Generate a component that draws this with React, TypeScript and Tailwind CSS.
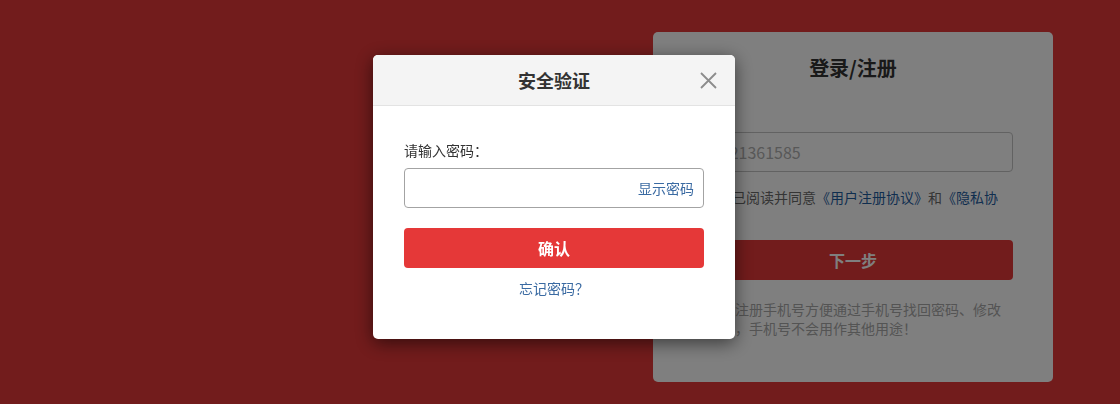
const FONT = "font-['Microsoft_YaHei','Noto_Sans_CJK_SC',sans-serif]";

function LoginPanel() {
  return (
    <div className="w-[400px] h-[350px] rounded-[5px] bg-white px-10 pt-[22px]">
      <h1 className="text-center text-[20px] leading-[28px] font-bold text-[#333]">
        登录/注册
      </h1>
      <div className="mt-[50px] h-10 rounded-[4px] border border-[#c4c4c4] px-[9px] flex items-center text-[16px] text-[#b0b0b0]">
        13521361585
      </div>
      <p className="mt-[15px] pr-[6px] text-[14px] leading-5 text-[#6a6a6a]">
        <span className="inline-block align-[-2px] mr-3 w-[13px] h-[13px] rounded-[2px] border border-[#999]" />
        我已阅读并同意
        <span className="text-[#1f5d9f]">《用户注册协议》</span>和
        <span className="text-[#1f5d9f]">《隐私协议》</span>
      </p>
      <button className="mt-[13px] w-full h-10 rounded-[4px] bg-[#e53838] text-white text-[16px] font-bold">
        下一步
      </button>
      <p className="mt-5 text-[14px] leading-[19px] text-[#a8a8a8]">
        提示：注册手机号方便通过手机号找回密码、修改密码等，手机号不会用作其他用途！
      </p>
    </div>
  );
}

function VerifyDialog() {
  return (
    <div className="fixed left-[373px] top-[55px] w-[362px] h-[284px] rounded-[5px] bg-white overflow-hidden shadow-[0_4px_18px_rgba(0,0,0,0.55)]">
      <div className="relative h-[51px] bg-[#f4f4f4] border-b border-[#e3e3e3] flex items-center justify-center">
        <span className="text-[18px] font-bold text-[#333]">安全验证</span>
        <button className="absolute right-[18px] top-[17px] w-[17px] h-[17px]" aria-label="关闭">
          <svg viewBox="0 0 17 17" className="w-[17px] h-[17px]" fill="none" stroke="#8c8c8c" strokeWidth="1.8">
            <path d="M1 1 L16 16 M16 1 L1 16" />
          </svg>
        </button>
      </div>
      <div className="px-[31px] pt-[34px]">
        <label className="block text-[14px] leading-5 text-[#333]">请输入密码：</label>
        <div className="mt-2 h-10 rounded-[4px] border border-[#a3a3a3] flex items-center justify-end pr-[9px]">
          <span className="text-[14px] text-[#3a6aa2]">显示密码</span>
        </div>
        <button className="mt-5 w-full h-10 rounded-[4px] bg-[#e53838] text-white text-[16px] font-bold">
          确认
        </button>
        <p className="mt-[10px] text-center text-[14px] leading-5 text-[#3a6aa2]">
          忘记密码？
        </p>
      </div>
    </div>
  );
}

export default function App() {
  return (
    <div className={`${FONT} relative w-[1120px] h-[404px] overflow-hidden bg-[#e53838] flex justify-end pr-[67px] pt-[32px]`}>
      <LoginPanel />
      <div className="fixed inset-0 bg-black/50" />
      <VerifyDialog />
    </div>
  );
}
